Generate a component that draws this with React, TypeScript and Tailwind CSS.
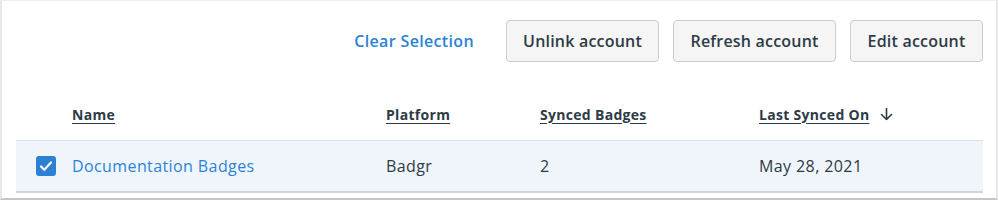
import React from "react";

export default function App() {
  const font = { fontFamily: "'Open Sans', Lato, sans-serif" };
  return (
    <div className="w-[998px] h-[201px] bg-white" style={font}>
      <div className="h-[200px] border-l-2 border-t border-r-2 border-b-2 border-l-[#e8e8e8] border-t-[#eeeeee] border-r-[#e8e8e8] border-b-[#c6c6c6] pl-[14px] pr-[13px]">
        <div className="flex items-center justify-end pt-[19px]">
          <button className="text-[16px] font-semibold tracking-[0.35px] text-[#2b83d6] mr-[32px] leading-none">
            Clear Selection
          </button>
          <div className="flex gap-[14px]">
            <button className="h-[42px] rounded-[4px] border border-[#c7cdd1] bg-[#f5f5f5] text-[16px] font-semibold tracking-[0.2px] text-[#2d3b45] w-[153px]">
              Unlink account
            </button>
            <button className="h-[42px] rounded-[4px] border border-[#c7cdd1] bg-[#f5f5f5] text-[16px] font-semibold tracking-[0.2px] text-[#2d3b45] w-[163px]">
              Refresh account
            </button>
            <button className="h-[42px] rounded-[4px] border border-[#c7cdd1] bg-[#f5f5f5] text-[16px] font-semibold tracking-[0.2px] text-[#2d3b45] w-[133px]">
              Edit account
            </button>
          </div>
        </div>
        <div className="grid grid-cols-[56px_314px_154px_219px_1fr] items-center h-[78px] pt-[26px] text-[14px] font-bold tracking-[0.3px] text-[#2d3b45]">
          <div />
          <div><span className="underline underline-offset-[3px]">Name</span></div>
          <div><span className="underline underline-offset-[3px]">Platform</span></div>
          <div><span className="underline underline-offset-[3px]">Synced Badges</span></div>
          <div className="flex items-center gap-[11px]">
            <span className="underline underline-offset-[3px]">Last Synced On</span>
            <svg width="13" height="14" viewBox="0 0 13 14" fill="none" stroke="#2d3b45" strokeWidth="1.6" strokeLinecap="round" strokeLinejoin="round">
              <path d="M6.5 1.5v11M1.5 7.5l5 5 5-5" />
            </svg>
          </div>
        </div>
        <div className="grid grid-cols-[56px_314px_154px_219px_1fr] items-center h-[53px] bg-[#f0f5fc] border-t border-b-2 border-t-[#dde1e5] border-b-[#d0d6db] text-[16px] tracking-[0.4px] text-[#2d3b45]">
          <div className="pl-[20px] flex items-center">
            <div className="w-[20px] h-[20px] rounded-[3px] bg-[#2d80d2] flex items-center justify-center">
              <svg width="14" height="12" viewBox="0 0 14 12" fill="none" stroke="white" strokeWidth="2.2" strokeLinecap="round" strokeLinejoin="round">
                <path d="M2 6.5l3.3 3.3L12 2.5" />
              </svg>
            </div>
          </div>
          <div className="text-[#2b83d6] font-medium">Documentation Badges</div>
          <div>Badgr</div>
          <div>2</div>
          <div>May 28, 2021</div>
        </div>
      </div>
    </div>
  );
}
